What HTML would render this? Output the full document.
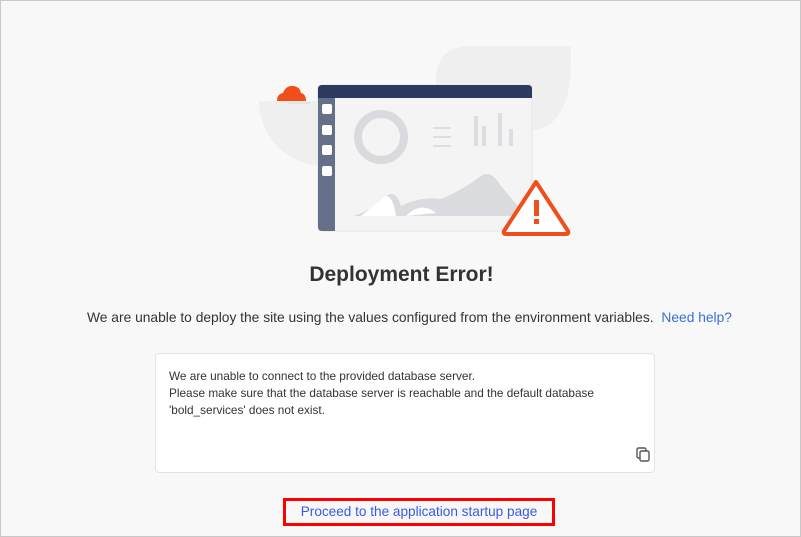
<!DOCTYPE html>
<html><head><style>
*{margin:0;padding:0;box-sizing:border-box}
body{width:801px;height:537px;background:#f8f8f8;font-family:"Liberation Sans",sans-serif;position:relative;overflow:hidden;border:1px solid #c8c8c8}
.a{position:absolute}
h1{position:absolute;top:262px;left:0;width:801px;text-align:center;font-size:21px;font-weight:bold;color:#333}
.p{top:309px;left:8px;width:801px;text-align:center;font-size:13.8px;color:#333}
.p span{color:#3a6fd8;margin-left:4px}
.box{left:154px;top:352px;width:500px;height:120px;background:#fff;border:1px solid #e3e3e3;border-radius:4px;padding:14px 13px;font-size:11.8px;line-height:17px;color:#333}
.btn{left:282px;top:497px;width:272px;height:28px;border:3px solid #f00;text-align:center;font-size:13.6px;line-height:22px;color:#3a58e8}
</style></head><body>
<svg class="a" style="left:0;top:0" width="801" height="260">
<path d="M258 100 A65 65 0 0 0 388 100 Z" fill="#efefef"/>
<path d="M435 80 Q435 45 470 45 L570 45 L570 60 Q570 125 530 130 L435 130 Z" fill="#efeff0"/>
<rect x="317" y="84" width="214" height="146" rx="4" fill="#f4f4f5" stroke="#e4e4e6"/>
<path d="M317 97 V88 Q317 84 321 84 H527 Q531 84 531 88 V97 Z" fill="#2b3a5e"/>
<path d="M317 97 H334 V230 H321 Q317 230 317 226 Z" fill="#647089"/>
<g fill="#fff"><rect x="321" y="103" width="10" height="10" rx="2"/><rect x="321" y="124" width="10" height="10" rx="2"/><rect x="321" y="144" width="10" height="10" rx="2"/><rect x="321" y="165" width="10" height="10" rx="2"/></g>
<circle cx="380" cy="136" r="23" fill="none" stroke="#d8dadd" stroke-width="8"/>
<g fill="#dcdee1"><rect x="473" y="115" width="4" height="30"/><rect x="481" y="125" width="4" height="20"/><rect x="497" y="112" width="4" height="33"/><rect x="508" y="128" width="4" height="17"/></g>
<g stroke="#dcdee1" stroke-width="2"><line x1="432" y1="127" x2="450" y2="127"/><line x1="432" y1="136" x2="450" y2="136"/><line x1="432" y1="145" x2="450" y2="145"/></g>
<path d="M352 215 Q370 210 385 195 Q395 188 400 205 Q420 195 440 198 Q460 190 480 175 Q490 168 500 185 L525 215 Z" fill="#d9dbde"/>
<path d="M360 215 Q378 200 385 195 Q392 195 395 215 Z M405 215 Q420 200 435 212 Z" fill="#fff"/>
<path d="M535 181 L567 230 Q568 233 565 233 L505 233 Q502 233 503 230 Z" fill="#fff" stroke="#f04e1a" stroke-width="4" stroke-linejoin="round"/>
<rect x="533" y="199" width="5" height="16" fill="#f04e1a"/><rect x="533" y="218" width="5" height="5" fill="#f04e1a"/>
<path d="M276 100 Q276 93 282 92 Q285 84 293 85 Q299 86 300 92 Q305 93 305 100 Z" fill="#f04e1a"/>
<line x1="287" y1="102" x2="309" y2="102" stroke="#d8dadd" stroke-width="1"/>
</svg>
<h1>Deployment Error!</h1>
<div class="a p">We are unable to deploy the site using the values configured from the environment variables. <span>Need help?</span></div>
<div class="a box">We are unable to connect to the provided database server.<br>Please make sure that the database server is reachable and the default database<br>'bold_services' does not exist.
<svg class="a" style="left:480px;top:93px" width="14" height="15"><rect x="1" y="1" width="9" height="10" rx="1.5" fill="none" stroke="#555" stroke-width="1.4"/><rect x="4" y="4" width="9" height="10" rx="1.5" fill="#fff" stroke="#555" stroke-width="1.4"/></svg></div>
<div class="a btn">Proceed to the application startup page</div>
</body></html>
